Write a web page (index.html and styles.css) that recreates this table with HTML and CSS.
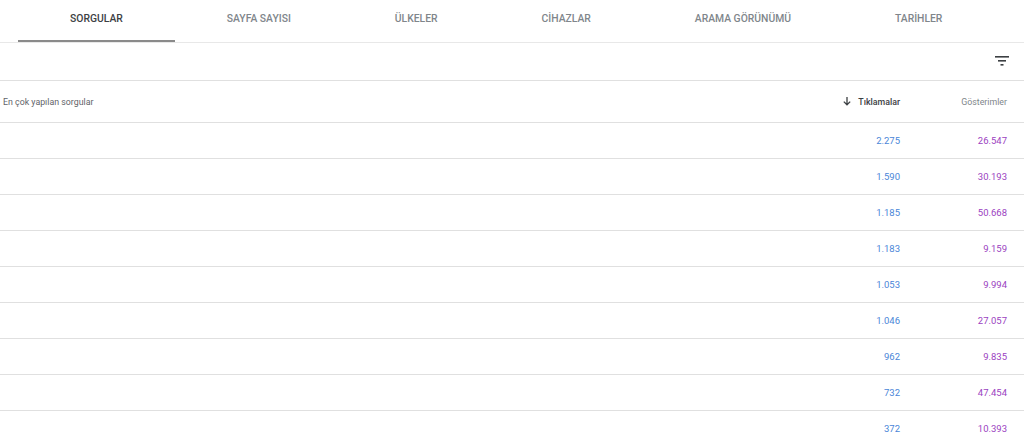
FILE: index.html
```html
<!DOCTYPE html>
<html lang="tr">
<head>
<meta charset="utf-8">
<link rel="stylesheet" href="styles.css">
</head>
<body>
<nav class="tabs">
  <div class="tab active">SORGULAR</div>
  <div class="tab">SAYFA SAYISI</div>
  <div class="tab">ÜLKELER</div>
  <div class="tab">CİHAZLAR</div>
  <div class="tab">ARAMA GÖRÜNÜMÜ</div>
  <div class="tab">TARİHLER</div>
</nav>
<div class="toolbar">
  <svg class="filter" width="14" height="10" viewBox="0 0 14 10"><rect x="0" y="0" width="14" height="1.6" fill="#3c4043"/><rect x="3" y="4" width="8" height="1.6" fill="#3c4043"/><rect x="5.5" y="8" width="3" height="1.6" fill="#3c4043"/></svg>
</div>
<div class="table">
  <div class="row head">
    <div class="c-query">En çok yapılan sorgular</div>
    <div class="c-num sorted"><svg class="arrow" width="8" height="9" viewBox="0 0 8 9"><path d="M4 0v7.5M0.8 4.6L4 7.8 7.2 4.6" fill="none" stroke="#3c4043" stroke-width="1.3"/></svg>Tıklamalar</div>
    <div class="c-num">Gösterimler</div>
  </div>
  <div class="row"><div class="c-query"></div><div class="c-num clicks">2.275</div><div class="c-num imps">26.547</div></div>
  <div class="row"><div class="c-query"></div><div class="c-num clicks">1.590</div><div class="c-num imps">30.193</div></div>
  <div class="row"><div class="c-query"></div><div class="c-num clicks">1.185</div><div class="c-num imps">50.668</div></div>
  <div class="row"><div class="c-query"></div><div class="c-num clicks">1.183</div><div class="c-num imps">9.159</div></div>
  <div class="row"><div class="c-query"></div><div class="c-num clicks">1.053</div><div class="c-num imps">9.994</div></div>
  <div class="row"><div class="c-query"></div><div class="c-num clicks">1.046</div><div class="c-num imps">27.057</div></div>
  <div class="row"><div class="c-query"></div><div class="c-num clicks">962</div><div class="c-num imps">9.835</div></div>
  <div class="row"><div class="c-query"></div><div class="c-num clicks">732</div><div class="c-num imps">47.454</div></div>
  <div class="row"><div class="c-query"></div><div class="c-num clicks">372</div><div class="c-num imps">10.393</div></div>
</div>
</body>
</html>
```
FILE: styles.css
```css
* { box-sizing: border-box; }
html, body { margin: 0; padding: 0; background: #fff; }
body {
  font-family: Roboto, "Liberation Sans", Arial, sans-serif;
  color: #202124;
  width: 1024px;
  height: 444px;
  overflow: hidden;
}
.tabs {
  display: flex;
  height: 43px;
  padding-left: 18px;
  border-bottom: 1px solid #e8e8e8;
}
.tab {
  padding: 0 52px;
  height: 42px;
  display: flex;
  align-items: center;
  font-size: 10.35px;
  font-weight: 500;
  color: #80868b;
  padding-bottom: 6px;
}
.tab.active {
  color: #3c4043;
  border-bottom: 2px solid #8a8a8a;
  padding-bottom: 4px;
}
.toolbar {
  height: 38px;
  display: flex;
  justify-content: flex-end;
  align-items: center;
  padding-right: 15px;
  border-bottom: 1px solid #e0e0e0;
}
.filter { display: block; margin-top: -2px; }
.row {
  display: flex;
  align-items: center;
  height: 36px;
  border-bottom: 1px solid #e0e0e0;
  font-size: 9.5px;
}
.row.head { height: 42px; }
.c-query {
  flex: 1;
  padding-left: 3px;
  color: #5f6368;
  font-size: 8.8px;
}
.c-num {
  width: 107px;
  text-align: right;
  display: flex;
  justify-content: flex-end;
  align-items: center;
}
.row .c-num:last-child { padding-right: 17px; width: 124px; }
.head .c-num { color: #80868b; font-size: 8.8px; }
.head .c-num.sorted { color: #3c4043; font-weight: 500; }
.arrow { margin-right: 7px; }
.clicks { color: #4a86d8; }
.imps { color: #9b3fbf; }
```
